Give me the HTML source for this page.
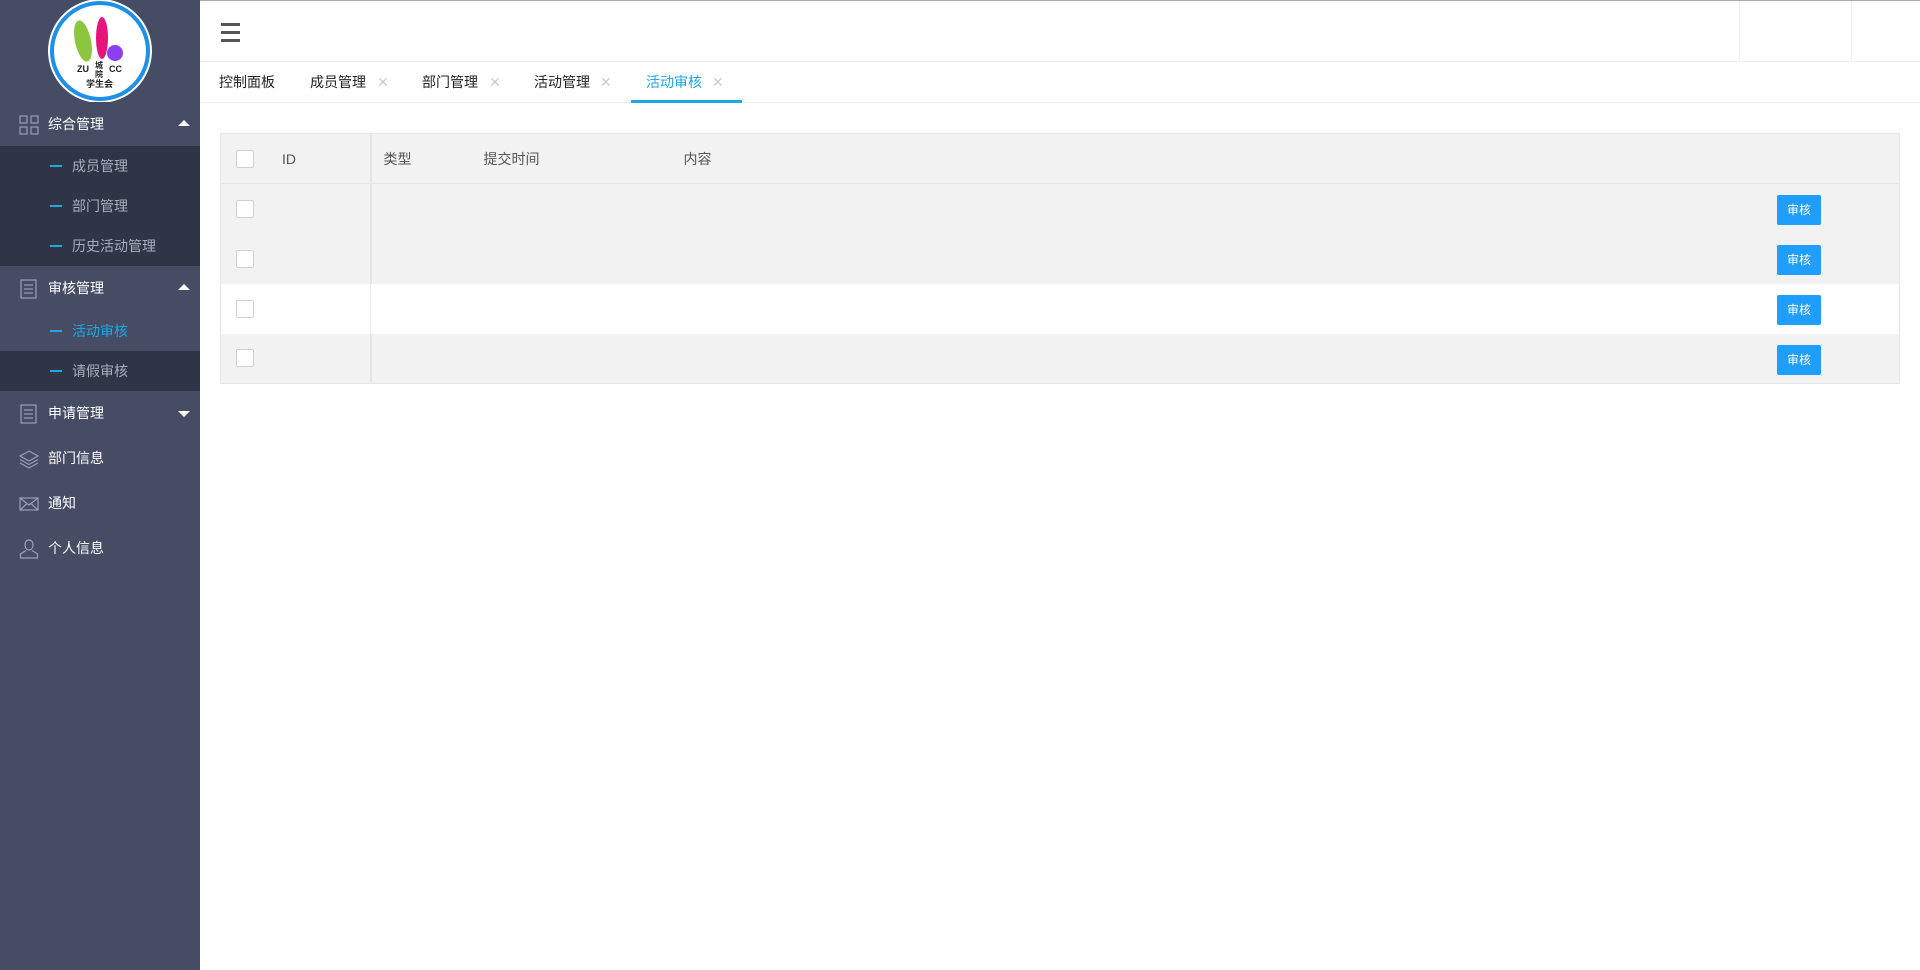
<!DOCTYPE html>
<html><head><meta charset="utf-8"><style>
*{margin:0;padding:0;box-sizing:border-box}
body{width:1920px;height:970px;overflow:hidden;font-family:"Liberation Sans","Noto Sans CJK SC",sans-serif;font-size:14px;background:#fff;position:relative}
.side{position:absolute;left:0;top:0;width:200px;height:970px;background:#454c64}
.logo{position:absolute;left:50px;top:1px;width:100px;height:100px;border-radius:50%;background:#fff;border:4px solid #1e90e6;box-shadow:0 0 0 2px #fff}
.item{position:absolute;left:0;width:200px;height:45px;color:#fff;line-height:45px}
.item .t{position:absolute;left:48px}
.item svg{position:absolute;left:19px;top:13px}
.sub{position:absolute;left:0;width:200px;height:40px;line-height:40px;color:#a8adbb}
.sub .t{position:absolute;left:72px}
.sub i{position:absolute;left:50px;top:19px;width:12px;height:2px;background:#1ca8e0}
.arr{position:absolute;left:178px;top:20px;width:0;height:0;border-left:6px solid transparent;border-right:6px solid transparent}
.up{border-bottom:6px solid #fff}
.down{border-top:6px solid #fff;top:20px}
.top{position:absolute;left:200px;top:0;right:0;height:62px;border-top:1px solid #aaa;border-bottom:1px solid #f0f0f0}
.tabs{position:absolute;left:200px;top:62px;right:0;height:41px;border-bottom:1px solid #eee}
.tab{position:absolute;top:0;line-height:40px;color:#222;font-size:14px}
.x{position:absolute;top:0;line-height:40px;color:#ccc;font-size:14px}
table{position:absolute;left:220px;top:133px;width:1680px;border-collapse:collapse;border:1px solid #e6e6e6;font-size:14px;color:#555}
td{height:50px;padding:0}
.cb{display:inline-block;width:18px;height:18px;border:1px solid #d2d2d2;background:#fff;border-radius:2px;margin-left:15px;vertical-align:middle}
.btn{position:absolute;left:1777px;width:44px;height:30px;background:#1e9fff;color:#fff;font-size:12px;text-align:center;line-height:30px;border-radius:2px}
</style></head><body>
<div class="side">
 <div class="logo">
  <svg width="92" height="92" viewBox="0 0 92 92" style="position:absolute;left:0;top:0">
   <ellipse cx="29" cy="36" rx="8" ry="21" fill="#8cc63f" transform="rotate(-12 29 36)"/>
   <ellipse cx="48" cy="33" rx="6" ry="21" fill="#e4157b"/>
   <circle cx="61" cy="48" r="8" fill="#8b3ff0"/>
   <text x="23" y="67" font-size="9" font-weight="bold" fill="#222" font-family="Liberation Sans">ZU</text>
   <text x="41" y="63" font-size="8" font-weight="bold" fill="#222" font-family="Noto Sans CJK SC">城</text>
   <text x="41" y="72" font-size="8" font-weight="bold" fill="#222" font-family="Noto Sans CJK SC">院</text>
   <text x="55" y="67" font-size="9" font-weight="bold" fill="#222" font-family="Liberation Sans">CC</text>
   <text x="32" y="82" font-size="9" font-weight="bold" fill="#222" font-family="Noto Sans CJK SC">学生会</text>
  </svg>
 </div>
 <div class="item" style="top:102px;background:#454c64"><svg width="20" height="20" viewBox="0 0 20 20" fill="none" stroke="#9aa0b2" stroke-width="1.2"><rect x="1" y="1" width="7" height="7"/><rect x="12" y="1" width="7" height="7"/><rect x="1" y="12" width="7" height="7"/><rect x="12" y="12" width="7" height="7"/></svg><span class="t">综合管理</span><span class="arr up" style="top:18px"></span></div>
 <div style="position:absolute;top:146px;left:0;width:200px;height:120px;background:#2f3446"></div>
 <div class="sub" style="top:146px"><i></i><span class="t">成员管理</span></div>
 <div class="sub" style="top:186px"><i></i><span class="t">部门管理</span></div>
 <div class="sub" style="top:226px"><i></i><span class="t">历史活动管理</span></div>
 <div class="item" style="top:266px"><svg width="20" height="20" viewBox="0 0 20 20" fill="none" stroke="#9aa0b2" stroke-width="1.2"><rect x="2" y="1" width="15" height="18"/><line x1="5" y1="6" x2="14" y2="6"/><line x1="5" y1="10" x2="14" y2="10"/><line x1="5" y1="14" x2="14" y2="14"/></svg><span class="t">审核管理</span><span class="arr up" style="top:18px"></span></div>
 <div class="sub" style="top:311px;color:#1ca8e0"><i></i><span class="t">活动审核</span></div>
 <div style="position:absolute;top:351px;left:0;width:200px;height:40px;background:#2f3446"></div>
 <div class="sub" style="top:351px"><i></i><span class="t">请假审核</span></div>
 <div class="item" style="top:391px"><svg width="20" height="20" viewBox="0 0 20 20" fill="none" stroke="#9aa0b2" stroke-width="1.2"><rect x="2" y="1" width="15" height="18"/><line x1="5" y1="6" x2="14" y2="6"/><line x1="5" y1="10" x2="14" y2="10"/><line x1="5" y1="14" x2="14" y2="14"/></svg><span class="t">申请管理</span><span class="arr down"></span></div>
 <div class="item" style="top:436px"><svg width="20" height="20" viewBox="0 0 20 20" fill="none" stroke="#9aa0b2" stroke-width="1.2"><path d="M10 2L19 7 10 12 1 7Z"/><path d="M1 10.5L10 15.5 19 10.5"/><path d="M1 14L10 19 19 14"/></svg><span class="t">部门信息</span></div>
 <div class="item" style="top:481px"><svg width="20" height="20" viewBox="0 0 20 20" fill="none" stroke="#9aa0b2" stroke-width="1.2"><rect x="1" y="4" width="18" height="12"/><path d="M1 4L10 11 19 4M1 16L8 9.5M19 16L12 9.5"/></svg><span class="t">通知</span></div>
 <div class="item" style="top:526px"><svg width="20" height="20" viewBox="0 0 20 20" fill="none" stroke="#9aa0b2" stroke-width="1.2"><path d="M10 1C7 1 6 3.5 6 6c0 2.5 1.5 5 4 5s4-2.5 4-5c0-2.5-1-5-4-5z"/><path d="M7 11.5L1.5 15v4h17v-4L13 11.5"/></svg><span class="t">个人信息</span></div>
</div>
<div class="top">
 <div style="position:absolute;left:21px;top:22px;width:19px">
  <div style="height:3px;background:#555;margin-bottom:5px"></div><div style="height:3px;background:#555;margin-bottom:5px"></div><div style="height:3px;background:#555"></div>
 </div>
 <div style="position:absolute;left:1539px;top:0;width:1px;height:61px;background:#f0f0f0"></div>
 <div style="position:absolute;left:1651px;top:0;width:1px;height:61px;background:#f0f0f0"></div>
</div>
<div class="tabs">
 <span class="tab" style="left:19px">控制面板</span>
 <span class="tab" style="left:110px">成员管理</span><span class="x" style="left:177px">✕</span>
 <span class="tab" style="left:222px">部门管理</span><span class="x" style="left:289px">✕</span>
 <span class="tab" style="left:334px">活动管理</span><span class="x" style="left:400px">✕</span>
 <span class="tab" style="left:446px;color:#1ca8e0">活动审核</span><span class="x" style="left:512px">✕</span>
 <div style="position:absolute;left:431px;top:38px;width:111px;height:3px;background:#1ca8e0"></div>
</div>
<table>
 <tr style="background:#f2f2f2"><td style="width:150px;border-right:2px solid #e6e6e6"><span class="cb"></span><span style="margin-left:28px;vertical-align:middle">ID</span></td><td><span style="margin-left:12px">类型</span><span style="margin-left:72px">提交时间</span><span style="margin-left:144px">内容</span></td></tr>
 <tr style="background:#f2f2f2;border-top:1px solid #e6e6e6"><td style="border-right:2px solid #e6e6e6"><span class="cb"></span></td><td></td></tr>
 <tr style="background:#f2f2f2"><td style="border-right:2px solid #e6e6e6"><span class="cb"></span></td><td></td></tr>
 <tr style="background:#fff"><td style="border-right:1px solid #eee"><span class="cb"></span></td><td></td></tr>
 <tr style="background:#f2f2f2"><td style="border-right:2px solid #e6e6e6"><span class="cb"></span></td><td></td></tr>
</table>
<div class="btn" style="top:195px">审核</div>
<div class="btn" style="top:245px">审核</div>
<div class="btn" style="top:295px">审核</div>
<div class="btn" style="top:345px">审核</div>
</body></html>
